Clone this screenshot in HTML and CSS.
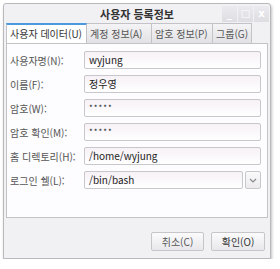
FILE: index.html
```html
<!DOCTYPE html>
<html lang="ko">
  <head>
    <meta charset="UTF-8" />
    <title>사용자 등록정보</title>
    <link rel="stylesheet" href="styles.css">
  </head>
  <body>
    <div class="window">
      <div class="titlebar">
        <span></span>
        <span class="title">사용자 등록정보</span>
        <div class="controls">
          <span class="ctl">_</span>
          <span class="ctl">&#9633;</span>
          <span class="ctl">x</span>
        </div>
      </div>

      <div class="tabs">
        <div class="tab active">사용자 데이터(U)</div>
        <div class="tab">계정 정보(A)</div>
        <div class="tab">암호 정보(P)</div>
        <div class="tab">그룹(G)</div>
      </div>

      <div class="panel">
        <div class="row">
          <label>사용자명(N):</label>
          <div class="field">wyjung</div>
        </div>
        <div class="row">
          <label>이름(F):</label>
          <div class="field">정우영</div>
        </div>
        <div class="row">
          <label>암호(W):</label>
          <div class="field stars">*****</div>
        </div>
        <div class="row">
          <label>암호 확인(M):</label>
          <div class="field stars">*****</div>
        </div>
        <div class="row">
          <label>홈 디렉토리(H):</label>
          <div class="field">/home/wyjung</div>
        </div>
        <div class="row">
          <label>로그인 쉘(L):</label>
          <div class="combo">
            <div class="field">/bin/bash</div>
            <div class="drop">
              <svg width="8" height="5" viewBox="0 0 8 5"><path d="M1 1 L4 4 L7 1" fill="none" stroke="#8a8a8a" stroke-width="1.2"/></svg>
            </div>
          </div>
        </div>
      </div>

      <div class="footer">
        <button>취소(C)</button>
        <button>확인(O)</button>
      </div>
    </div>
  </body>
</html>
```

FILE: styles.css
```css
html,
body {
  margin: 0;
  padding: 0;
  background: #fff;
  font-family: "Noto Sans CJK KR", "Noto Sans", sans-serif;
  font-size: 10px;
  color: #333;
}

.window {
  margin: 3px 0 0 3px;
  width: 268px;
  height: 256px;
  box-sizing: border-box;
  border: 1px solid #b9b9bd;
  border-radius: 3px 3px 0 0;
  background: #f1f0f3;
  box-shadow: 1px 2px 3px rgba(0, 0, 0, 0.25);
  display: flex;
  flex-direction: column;
}

.titlebar {
  height: 19px;
  display: grid;
  grid-template-columns: 1fr auto 1fr;
  align-items: center;
}

.title {
  font-weight: bold;
  color: #333;
  font-size: 11px;
}

.controls {
  justify-self: end;
  display: flex;
  margin-right: 1px;
  margin-top: 1px;
}

.ctl {
  width: 15px;
  height: 16px;
  margin-left: 1px;
  background: linear-gradient(#ebeaee, #dedde2);
  color: #fff;
  font-size: 10px;
  line-height: 15px;
  text-align: center;
  font-weight: bold;
  font-family: "DejaVu Sans", sans-serif;
}

.tabs {
  display: flex;
  margin: 0 2px;
  height: 20px;
}

.tab {
  box-sizing: border-box;
  height: 20px;
  padding: 0 0 0 3px;
  border: 1px solid #c3c3c7;
  border-bottom: none;
  border-left: none;
  background: linear-gradient(#f4f4f6, #e2e1e5);
  color: #555;
  line-height: 19px;
  white-space: nowrap;
  overflow: hidden;
}

.tab:nth-child(2) {
  width: 65px;
}

.tab:nth-child(3) {
  width: 61px;
}

.tab:nth-child(4) {
  width: 39px;
}

.tab.active {
  width: 81px;
  border-left: 1px solid #c3c3c7;
  border-top: 2px solid #4b9ae0;
  background: #fff;
  color: #333;
  line-height: 17px;
}

.panel {
  margin: 0 2px;
  height: 175px;
  box-sizing: border-box;
  border: 1px solid #c3c3c7;
  background: #fdfcfe;
  padding: 7px 6px 0 3px;
  display: flex;
  flex-direction: column;
  gap: 6px;
}

.row {
  display: grid;
  grid-template-columns: 74px 1fr;
  align-items: center;
  height: 18px;
}

label {
  color: #555;
  white-space: nowrap;
}

.field {
  height: 18px;
  box-sizing: border-box;
  border: 1px solid #c8c8cc;
  border-radius: 2px;
  background: linear-gradient(#f6f1f6, #fff);
  padding-left: 4px;
  line-height: 16px;
  color: #222;
}

.stars {
  font-size: 8px;
  letter-spacing: 1px;
}

.combo {
  display: flex;
  gap: 2px;
}

.combo .field {
  flex: 1;
}

.drop {
  width: 16px;
  height: 18px;
  box-sizing: border-box;
  border: 1px solid #c8c8cc;
  border-radius: 2px;
  background: linear-gradient(#fafafa, #eceaee);
  display: flex;
  align-items: center;
  justify-content: center;
}

.footer {
  display: flex;
  justify-content: flex-end;
  gap: 7px;
  padding: 14px 5px 0 0;
}

button {
  height: 19px;
  width: 53px;
  padding: 0;
  border: 1px solid #c6c6ca;
  border-radius: 2px;
  background: linear-gradient(#fbfbfc, #e8e7eb);
  font-family: "Noto Sans CJK KR", "Noto Sans", sans-serif;
  font-size: 10px;
  color: #555;
}

button:last-child {
  width: 54px;
  color: #333;
}
```
